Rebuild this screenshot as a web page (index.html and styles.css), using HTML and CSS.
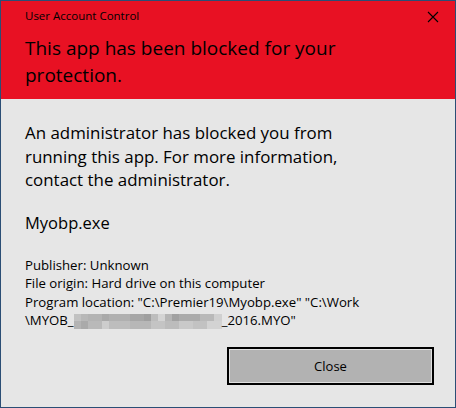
FILE: index.html
```html
<!DOCTYPE html>
<html lang="en">
<head>
  <meta charset="UTF-8">
  <title>User Account Control</title>
  <link rel="stylesheet" href="styles.css">
</head>
<body>
  <div class="window">
    <div class="banner">
      <div class="titlebar">
        <span class="title">User Account Control</span>
        <svg class="close-x" width="12" height="12" viewBox="0 0 12 12">
          <path d="M1 1 L11 11 M11 1 L1 11" stroke="#000" stroke-width="1.1" fill="none"/>
        </svg>
      </div>
      <h1>This app has been blocked for your<br>protection.</h1>
    </div>
    <div class="content">
      <p class="message">An administrator has blocked you from<br>running this app. For more information,<br>contact the administrator.</p>
      <p class="app-name">Myobp.exe</p>
      <div class="details">
        <div>Publisher: Unknown</div>
        <div>File origin: Hard drive on this computer</div>
        <div>Program location: "C:\Premier19\Myobp.exe" "C:\Work</div>
        <div>\MYOB_<span class="blurred"></span>_2016.MYO"</div>
      </div>
      <div class="actions">
        <button class="btn-close">Close</button>
      </div>
    </div>
  </div>
</body>
</html>
```

FILE: styles.css
```css
body {
  margin: 0;
  font-family: "Open Sans", sans-serif;
  color: #000;
}
.window {
  box-sizing: border-box;
  width: 456px;
  height: 408px;
  border: 1px solid #2b4e75;
  background-color: #e6e6e6;
  display: flex;
  flex-direction: column;
}
.banner {
  background-color: #e81123;
  height: 98px;
  box-sizing: border-box;
  padding: 7px 0 0 24px;
}
.titlebar {
  display: flex;
  justify-content: space-between;
  align-items: center;
  height: 16px;
}
.title {
  font-size: 11.5px;
  line-height: 16px;
}
.close-x {
  margin-right: 16px;
  margin-top: 2px;
}
h1 {
  margin: 11px 0 0 0;
  font-size: 19px;
  font-weight: normal;
  line-height: 27px;
  white-space: nowrap;
}
.content {
  padding: 22px 21px 0 24px;
}
.message {
  margin: 0;
  font-size: 16.9px;
  line-height: 23.5px;
  white-space: nowrap;
}
.app-name {
  margin: 19px 0 0 0;
  font-size: 16.5px;
  line-height: 23.5px;
}
.details {
  margin-top: 22px;
  font-size: 13.2px;
  line-height: 18.3px;
  white-space: nowrap;
}
.blurred {
  display: inline-block;
  width: 148px;
  height: 15px;
  vertical-align: -4px;
  background-image:
    linear-gradient(90deg, #c2c2c2 0 7px, #b8b8b8 7px 14px, #b3b3b3 14px 28px, #a9a9a9 28px 35px, #b0b0b0 35px 56px, #a6a6a6 56px 70px, #9f9f9f 70px 77px, #bdbdbd 77px 84px, #d4d4d4 84px 91px, #b5b5b5 91px 98px, #a1a1a1 98px 105px, #ababab 105px 126px, #b9b9b9 126px 140px, #d0d0d0 140px 148px),
    linear-gradient(90deg, #b4b4b4 0 7px, #aaaaaa 7px 14px, #b9b9b9 14px 28px, #cdcdcd 28px 35px, #bdbdbd 35px 56px, #b7b7b7 56px 77px, #c4c4c4 77px 91px, #bcbcbc 91px 105px, #c9c9c9 105px 119px, #c2c2c2 119px 133px, #d3d3d3 133px 148px);
  background-size: 100% 7px, 100% 8px;
  background-position: 0 0, 0 7px;
  background-repeat: no-repeat;
}
.actions {
  display: flex;
  justify-content: flex-end;
  margin-top: 18px;
}
.btn-close {
  width: 207px;
  height: 38px;
  border: 2px solid #000;
  box-shadow: inset 0 0 0 1px #e0e0e0;
  background-color: #b2b2b2;
  font-family: inherit;
  font-size: 13px;
  color: #000;
  padding: 0;
}
```
